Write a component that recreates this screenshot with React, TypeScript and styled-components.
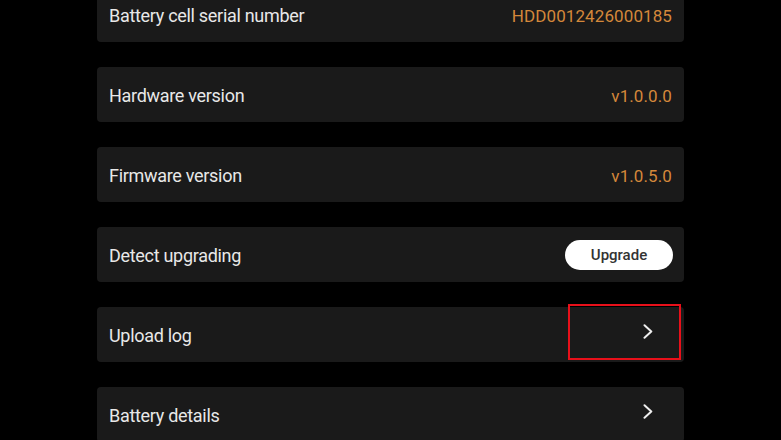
import React from "react";
import styled, { createGlobalStyle } from "styled-components";

const Global = createGlobalStyle`
  html, body { margin: 0; padding: 0; background: #000; }
  body { font-family: Roboto, "Noto Sans", sans-serif; -webkit-font-smoothing: antialiased; }
`;

const Page = styled.div`
  width: 781px;
  height: 440px;
  overflow: hidden;
  background: #000;
`;

const List = styled.div`
  display: flex;
  flex-direction: column;
  gap: 25px;
  width: 587px;
  margin: -13px 0 0 97px;
`;

const Row = styled.div`
  position: relative;
  height: 55px;
  box-sizing: border-box;
  padding: 2px 12px 0;
  display: flex;
  align-items: center;
  justify-content: space-between;
  background: #1a1a1a;
  border-radius: 4px;
`;

const Label = styled.span`
  color: #e8e8e8;
  font-size: 18px;
  letter-spacing: -0.3px;
`;

const Value = styled.span`
  color: #d4883a;
  font-size: 17px;
  letter-spacing: 0.1px;
`;

const UpgradeButton = styled.button`
  width: 108px;
  height: 30px;
  border: none;
  border-radius: 15px;
  background: #fff;
  color: #333;
  font-family: Roboto, "Noto Sans", sans-serif;
  font-size: 15px;
  font-weight: 500;
  padding: 0;
  margin: 0 -1px 2px 0;
`;

const Chevron = styled.svg`
  width: 10px;
  height: 15px;
  margin-right: 19px;
  margin-bottom: 9px;
`;

const Highlight = styled.div`
  position: absolute;
  left: 471px;
  top: -3px;
  width: 113px;
  height: 56px;
  box-sizing: border-box;
  border: 2px solid #e8101a;
  pointer-events: none;
`;

const Arrow = () => (
  <Chevron viewBox="0 0 10 15">
    <path d="M1.5 1.2 L8.3 7.5 L1.5 13.8" fill="none" stroke="#eeeeee" strokeWidth="2" strokeLinecap="round" strokeLinejoin="round" />
  </Chevron>
);

export default function App() {
  return (
    <Page>
      <Global />
      <List>
        <Row>
          <Label>Battery cell serial number</Label>
          <Value>HDD0012426000185</Value>
        </Row>
        <Row>
          <Label>Hardware version</Label>
          <Value>v1.0.0.0</Value>
        </Row>
        <Row>
          <Label>Firmware version</Label>
          <Value>v1.0.5.0</Value>
        </Row>
        <Row>
          <Label>Detect upgrading</Label>
          <UpgradeButton>Upgrade</UpgradeButton>
        </Row>
        <Row>
          <Label>Upload log</Label>
          <Arrow />
          <Highlight />
        </Row>
        <Row>
          <Label>Battery details</Label>
          <Arrow />
        </Row>
      </List>
    </Page>
  );
}
